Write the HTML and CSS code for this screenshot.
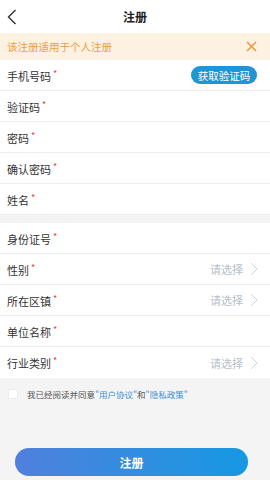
FILE: index.html
```html
<!DOCTYPE html>
<html lang="zh-CN">
<head>
    <meta charset="UTF-8">
    <meta name="viewport" content="width=device-width, initial-scale=1.0">
    <title>注册</title>
    <link rel="stylesheet" href="styles.css">
</head>
<body>
    <div class="page">
        <div class="header">
            <svg class="back" width="10" height="16" viewBox="0 0 10 16">
                <path d="M8.5 1 L1.5 8 L8.5 15" fill="none" stroke="#333" stroke-width="1.4"/>
            </svg>
            <div class="title">注册</div>
        </div>
        <div class="notice">
            <span>该注册适用于个人注册</span>
            <svg class="close" width="11" height="11" viewBox="0 0 11 11">
                <path d="M1 1 L10 10 M10 1 L1 10" fill="none" stroke="#ec9a3c" stroke-width="1.5"/>
            </svg>
        </div>

        <div class="group">
            <div class="row">
                <div class="label">手机号码<i>*</i></div>
                <button class="code-btn">获取验证码</button>
            </div>
            <div class="row"><div class="label">验证码<i>*</i></div></div>
            <div class="row"><div class="label">密码<i>*</i></div></div>
            <div class="row"><div class="label">确认密码<i>*</i></div></div>
            <div class="row"><div class="label">姓名<i>*</i></div></div>
        </div>

        <div class="group">
            <div class="row"><div class="label">身份证号<i>*</i></div></div>
            <div class="row">
                <div class="label">性别<i>*</i></div>
                <div class="pick">请选择<svg width="8" height="14" viewBox="0 0 8 14"><path d="M1 1 L7 7 L1 13" fill="none" stroke="#d2d2d2" stroke-width="1"/></svg></div>
            </div>
            <div class="row">
                <div class="label">所在区镇<i>*</i></div>
                <div class="pick">请选择<svg width="8" height="14" viewBox="0 0 8 14"><path d="M1 1 L7 7 L1 13" fill="none" stroke="#d2d2d2" stroke-width="1"/></svg></div>
            </div>
            <div class="row"><div class="label">单位名称<i>*</i></div></div>
            <div class="row last">
                <div class="label">行业类别<i>*</i></div>
                <div class="pick">请选择<svg width="8" height="14" viewBox="0 0 8 14"><path d="M1 1 L7 7 L1 13" fill="none" stroke="#d2d2d2" stroke-width="1"/></svg></div>
            </div>
        </div>

        <div class="agree">
            <span class="check"></span>
            <span>我已经阅读并同意<a>"用户协议"</a>和<a>"隐私政策"</a></span>
        </div>

        <div class="submit-wrap">
            <button class="submit">注册</button>
        </div>
    </div>
</body>
</html>
```
FILE: styles.css
```css
* {
    box-sizing: border-box;
}

body {
    margin: 0;
    background-color: #f4f4f4;
    font-family: "Noto Sans CJK SC", "Noto Sans", sans-serif;
    color: #333;
}

.page {
    width: 270px;
    height: 480px;
    display: flex;
    flex-direction: column;
}

.header {
    height: 33px;
    background-color: #fff;
    display: flex;
    align-items: center;
    justify-content: center;
    position: relative;
}

.back {
    position: absolute;
    left: 7px;
    top: 9px;
}

.title {
    font-size: 12px;
    font-weight: bold;
    color: #222;
}

.notice {
    height: 27px;
    background-color: #fdf1e2;
    color: #eb9d44;
    font-size: 10.5px;
    display: flex;
    align-items: center;
    justify-content: space-between;
    padding: 0 13px 0 7px;
}

.group {
    background-color: #fff;
    margin-bottom: 8px;
}

.row {
    height: 31px;
    border-bottom: 1.5px solid #efefef;
    display: flex;
    align-items: center;
    justify-content: space-between;
    padding: 0 12px 0 7px;
}

.row.last {
    border-bottom: none;
}

.label {
    font-size: 11px;
    color: #333;
}

.label i {
    font-style: normal;
    color: #e0453c;
    font-size: 9px;
    vertical-align: 4px;
    margin-left: 2px;
}

.code-btn {
    border: none;
    background-color: #1e95d9;
    color: #fff;
    font-family: inherit;
    font-size: 10.5px;
    height: 18px;
    width: 66px;
    padding: 0;
    border-radius: 9px;
    margin-right: 1px;
}

.pick {
    display: flex;
    align-items: center;
    gap: 7px;
    font-size: 11px;
    color: #b8c0c8;
}

.agree {
    display: flex;
    align-items: center;
    gap: 9px;
    padding: 2px 8px;
    font-size: 8.5px;
    color: #555;
}

.check {
    width: 10px;
    height: 10px;
    background-color: #fff;
    border: 1px solid #ececec;
    border-radius: 1px;
}

.agree a {
    color: #3b8fd6;
}

.submit-wrap {
    margin-top: auto;
    padding: 0 22px 4px 15px;
}

.submit {
    width: 100%;
    height: 28px;
    border: none;
    border-radius: 14px;
    background: linear-gradient(90deg, #5080dd, #1699e2);
    color: #fff;
    font-family: inherit;
    font-size: 12px;
    font-weight: bold;
}
```
